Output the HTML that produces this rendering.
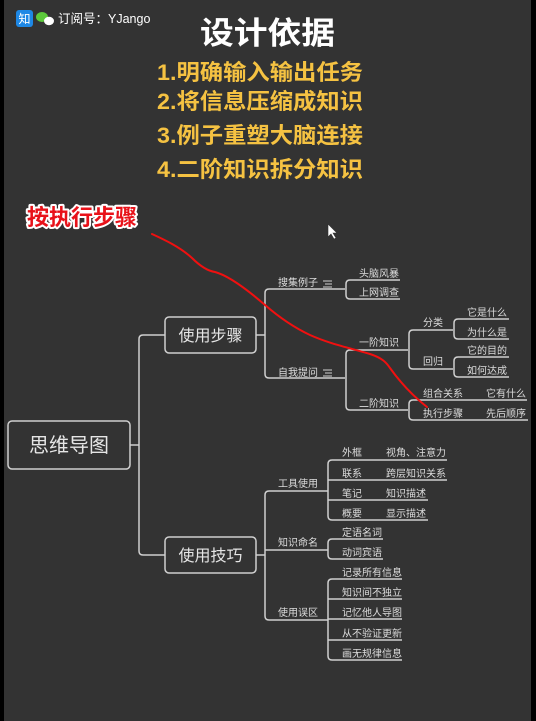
<!DOCTYPE html>
<html><head><meta charset="utf-8"><style>
html,body{margin:0;padding:0;background:#000;}
body{width:536px;height:721px;overflow:hidden;position:relative;}
svg{position:absolute;left:0;top:0;}
text{font-family:"Liberation Sans","Noto Sans CJK SC",sans-serif;}
</style></head><body>
<svg width="536" height="721" viewBox="0 0 536 721" xmlns="http://www.w3.org/2000/svg">
<rect x="4" y="0" width="527" height="721" fill="#333333"/>
<rect x="16" y="10" width="17" height="17" rx="3" fill="#1e88e5"/>
<text x="24.5" y="23" font-size="12" fill="#fff" text-anchor="middle">知</text>
<ellipse cx="42" cy="17" rx="6" ry="5" fill="#5cc93b"/>
<ellipse cx="49" cy="21" rx="5" ry="4.2" fill="#fff"/>
<text x="58" y="23" font-size="12.5" fill="#fff">订阅号：YJango</text>
<text x="200" y="44" font-size="31" font-weight="bold" fill="#fff" textLength="135" lengthAdjust="spacingAndGlyphs">设计依据</text>
<g font-size="22" font-weight="bold" fill="#f5c242">
<text x="157" y="80" textLength="206" lengthAdjust="spacingAndGlyphs">1.明确输入输出任务</text>
<text x="157" y="109" textLength="206" lengthAdjust="spacingAndGlyphs">2.将信息压缩成知识</text>
<text x="157" y="143" textLength="206" lengthAdjust="spacingAndGlyphs">3.例子重塑大脑连接</text>
<text x="157" y="177" textLength="206" lengthAdjust="spacingAndGlyphs">4.二阶知识拆分知识</text>
</g>
<text x="27" y="225" font-size="22" font-weight="bold" fill="#e8121a" stroke="#fff" stroke-width="4" paint-order="stroke" stroke-linejoin="round" textLength="110" lengthAdjust="spacingAndGlyphs">按执行步骤</text>
<path d="M328 224 L328 237 L331 234 L334 239 L336 238 L333 233 L337 233 Z" fill="#fff" stroke="#333" stroke-width="0.6"/>
<g stroke="#d0d0d0" stroke-width="1.5" fill="none">
<rect x="8" y="421" width="122" height="48" rx="4"/>
<rect x="165" y="317" width="91" height="36" rx="4"/>
<rect x="165" y="537" width="91" height="36" rx="4"/>
<path d="M130 445 H139 M165 335 H143 Q139 335 139 339 V551 Q139 555 143 555 H165"/>
<path d="M256 335 H265"/>
<path d="M345 289 H269 Q265 289 265 293 V374 Q265 378 269 378 H345"/>
<path d="M400 280 H350 Q346 280 346 284 V295 Q346 299 350 299 H400"/>
<path d="M408 350 H350 Q346 350 346 354 V406 Q346 410 350 410 H408"/>
<path d="M453 330 H413 Q409 330 409 334 V365 Q409 369 413 369 H453"/>
<path d="M509 319 H458 Q454 319 454 323 V335 Q454 339 458 339 H509"/>
<path d="M509 357 H458 Q454 357 454 361 V373 Q454 377 458 377 H509"/>
<path d="M527 400 H413 Q409 400 409 404 V416 Q409 420 413 420 H528"/>
<path d="M256 555 H265"/>
<path d="M328 491 H269 Q265 491 265 495 V616 Q265 620 269 620 H328"/>
<path d="M265 550 H328"/>
<path d="M447 460 H332 Q328 460 328 464 V516 Q328 520 332 520 H428"/>
<path d="M328 480 H447 M328 500 H428"/>
<path d="M383 539 H332 Q328 539 328 543 V555 Q328 559 332 559 H383"/>
<path d="M402 579 H332 Q328 579 328 583 V656 Q328 660 332 660 H402"/>
<path d="M328 599 H402 M328 619 H402 M328 640 H402"/>
<path d="M323 281 h9 M325 284 h7 M323 287 h9 M323 370 h9 M325 373 h7 M323 376 h9" stroke-width="1"/>
</g>
<g fill="#e6e6e6">
<text x="69" y="452" font-size="20" text-anchor="middle">思维导图</text>
<text x="210.5" y="341" font-size="16" text-anchor="middle">使用步骤</text>
<text x="210.5" y="561" font-size="16" text-anchor="middle">使用技巧</text>
</g>
<g fill="#dcdcdc" font-size="10">
<text x="278" y="286">搜集例子</text>
<text x="359" y="277">头脑风暴</text>
<text x="359" y="296">上网调查</text>
<text x="278" y="376">自我提问</text>
<text x="359" y="346">一阶知识</text>
<text x="359" y="407">二阶知识</text>
<text x="423" y="326">分类</text>
<text x="423" y="365">回归</text>
<text x="467" y="316">它是什么</text>
<text x="467" y="336">为什么是</text>
<text x="467" y="354">它的目的</text>
<text x="467" y="374">如何达成</text>
<text x="423" y="397">组合关系</text>
<text x="486" y="397">它有什么</text>
<text x="423" y="417">执行步骤</text>
<text x="486" y="417">先后顺序</text>
<text x="278" y="487">工具使用</text>
<text x="278" y="546">知识命名</text>
<text x="278" y="616">使用误区</text>
<text x="342" y="456">外框</text><text x="386" y="456">视角、注意力</text>
<text x="342" y="477">联系</text><text x="386" y="477">跨层知识关系</text>
<text x="342" y="497">笔记</text><text x="386" y="497">知识描述</text>
<text x="342" y="517">概要</text><text x="386" y="517">显示描述</text>
<text x="342" y="536">定语名词</text>
<text x="342" y="556">动词宾语</text>
<text x="342" y="576">记录所有信息</text>
<text x="342" y="596">知识间不独立</text>
<text x="342" y="616">记忆他人导图</text>
<text x="342" y="637">从不验证更新</text>
<text x="342" y="657">画无规律信息</text>
</g>
<path d="M152 234 C165 240 180 247 192 258 C200 266 208 271 215 272 C230 276 250 292 265 305 C280 318 295 328 310 335 C330 344 350 348 370 354 C382 358 386 362 390 368 C400 382 413 396 427 407" stroke="#f01010" stroke-width="2" fill="none" stroke-linecap="round"/>
</svg>
</body></html>
